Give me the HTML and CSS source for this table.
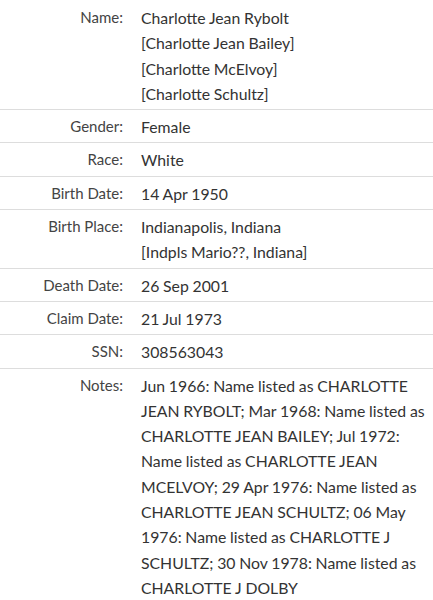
FILE: index.html
```html
<!DOCTYPE html>
<html lang="en">
<head>
    <meta charset="UTF-8" />
    <meta name="viewport" content="width=device-width, initial-scale=1.0" />
    <title>Record Details</title>
    <link rel="stylesheet" href="styles.css">
</head>
<body>
    <div class="record">
        <div class="row">
            <div class="label">Name:</div>
            <div class="value">
                Charlotte Jean Rybolt<br>
                [Charlotte Jean Bailey]<br>
                [Charlotte McElvoy]<br>
                [Charlotte Schultz]
            </div>
        </div>
        <div class="row">
            <div class="label">Gender:</div>
            <div class="value">Female</div>
        </div>
        <div class="row">
            <div class="label">Race:</div>
            <div class="value">White</div>
        </div>
        <div class="row">
            <div class="label">Birth Date:</div>
            <div class="value">14 Apr 1950</div>
        </div>
        <div class="row">
            <div class="label">Birth Place:</div>
            <div class="value">
                Indianapolis, Indiana<br>
                [Indpls Mario??, Indiana]
            </div>
        </div>
        <div class="row">
            <div class="label">Death Date:</div>
            <div class="value">26 Sep 2001</div>
        </div>
        <div class="row">
            <div class="label">Claim Date:</div>
            <div class="value">21 Jul 1973</div>
        </div>
        <div class="row">
            <div class="label">SSN:</div>
            <div class="value">308563043</div>
        </div>
        <div class="row">
            <div class="label">Notes:</div>
            <div class="value">Jun 1966: Name listed as CHARLOTTE JEAN RYBOLT; Mar 1968: Name listed as CHARLOTTE JEAN BAILEY; Jul 1972: Name listed as CHARLOTTE JEAN MCELVOY; 29 Apr 1976: Name listed as CHARLOTTE JEAN SCHULTZ; 06 May 1976: Name listed as CHARLOTTE J SCHULTZ; 30 Nov 1978: Name listed as CHARLOTTE J DOLBY</div>
        </div>
    </div>
</body>
</html>
```

FILE: styles.css
```css
:root {
    --texto: #333;
    --etiqueta: #444;
    --linea: #ddd;
}

body {
    margin: 0;
    font-family: Lato, 'Liberation Sans', sans-serif;
    background: white;
    color: var(--texto);
}

.record {
    padding-top: 1px;
}

.row {
    display: grid;
    grid-template-columns: 123px 1fr;
    column-gap: 18px;
    padding: 4px 0 3px 0;
    border-bottom: 1px solid var(--linea);
    line-height: 25.3px;
}

    .row:last-child {
        border-bottom: none;
    }

.label {
    text-align: right;
    font-size: 15px;
    color: var(--etiqueta);
}

.value {
    font-size: 15.8px;
    word-spacing: -0.3px;
}
```
